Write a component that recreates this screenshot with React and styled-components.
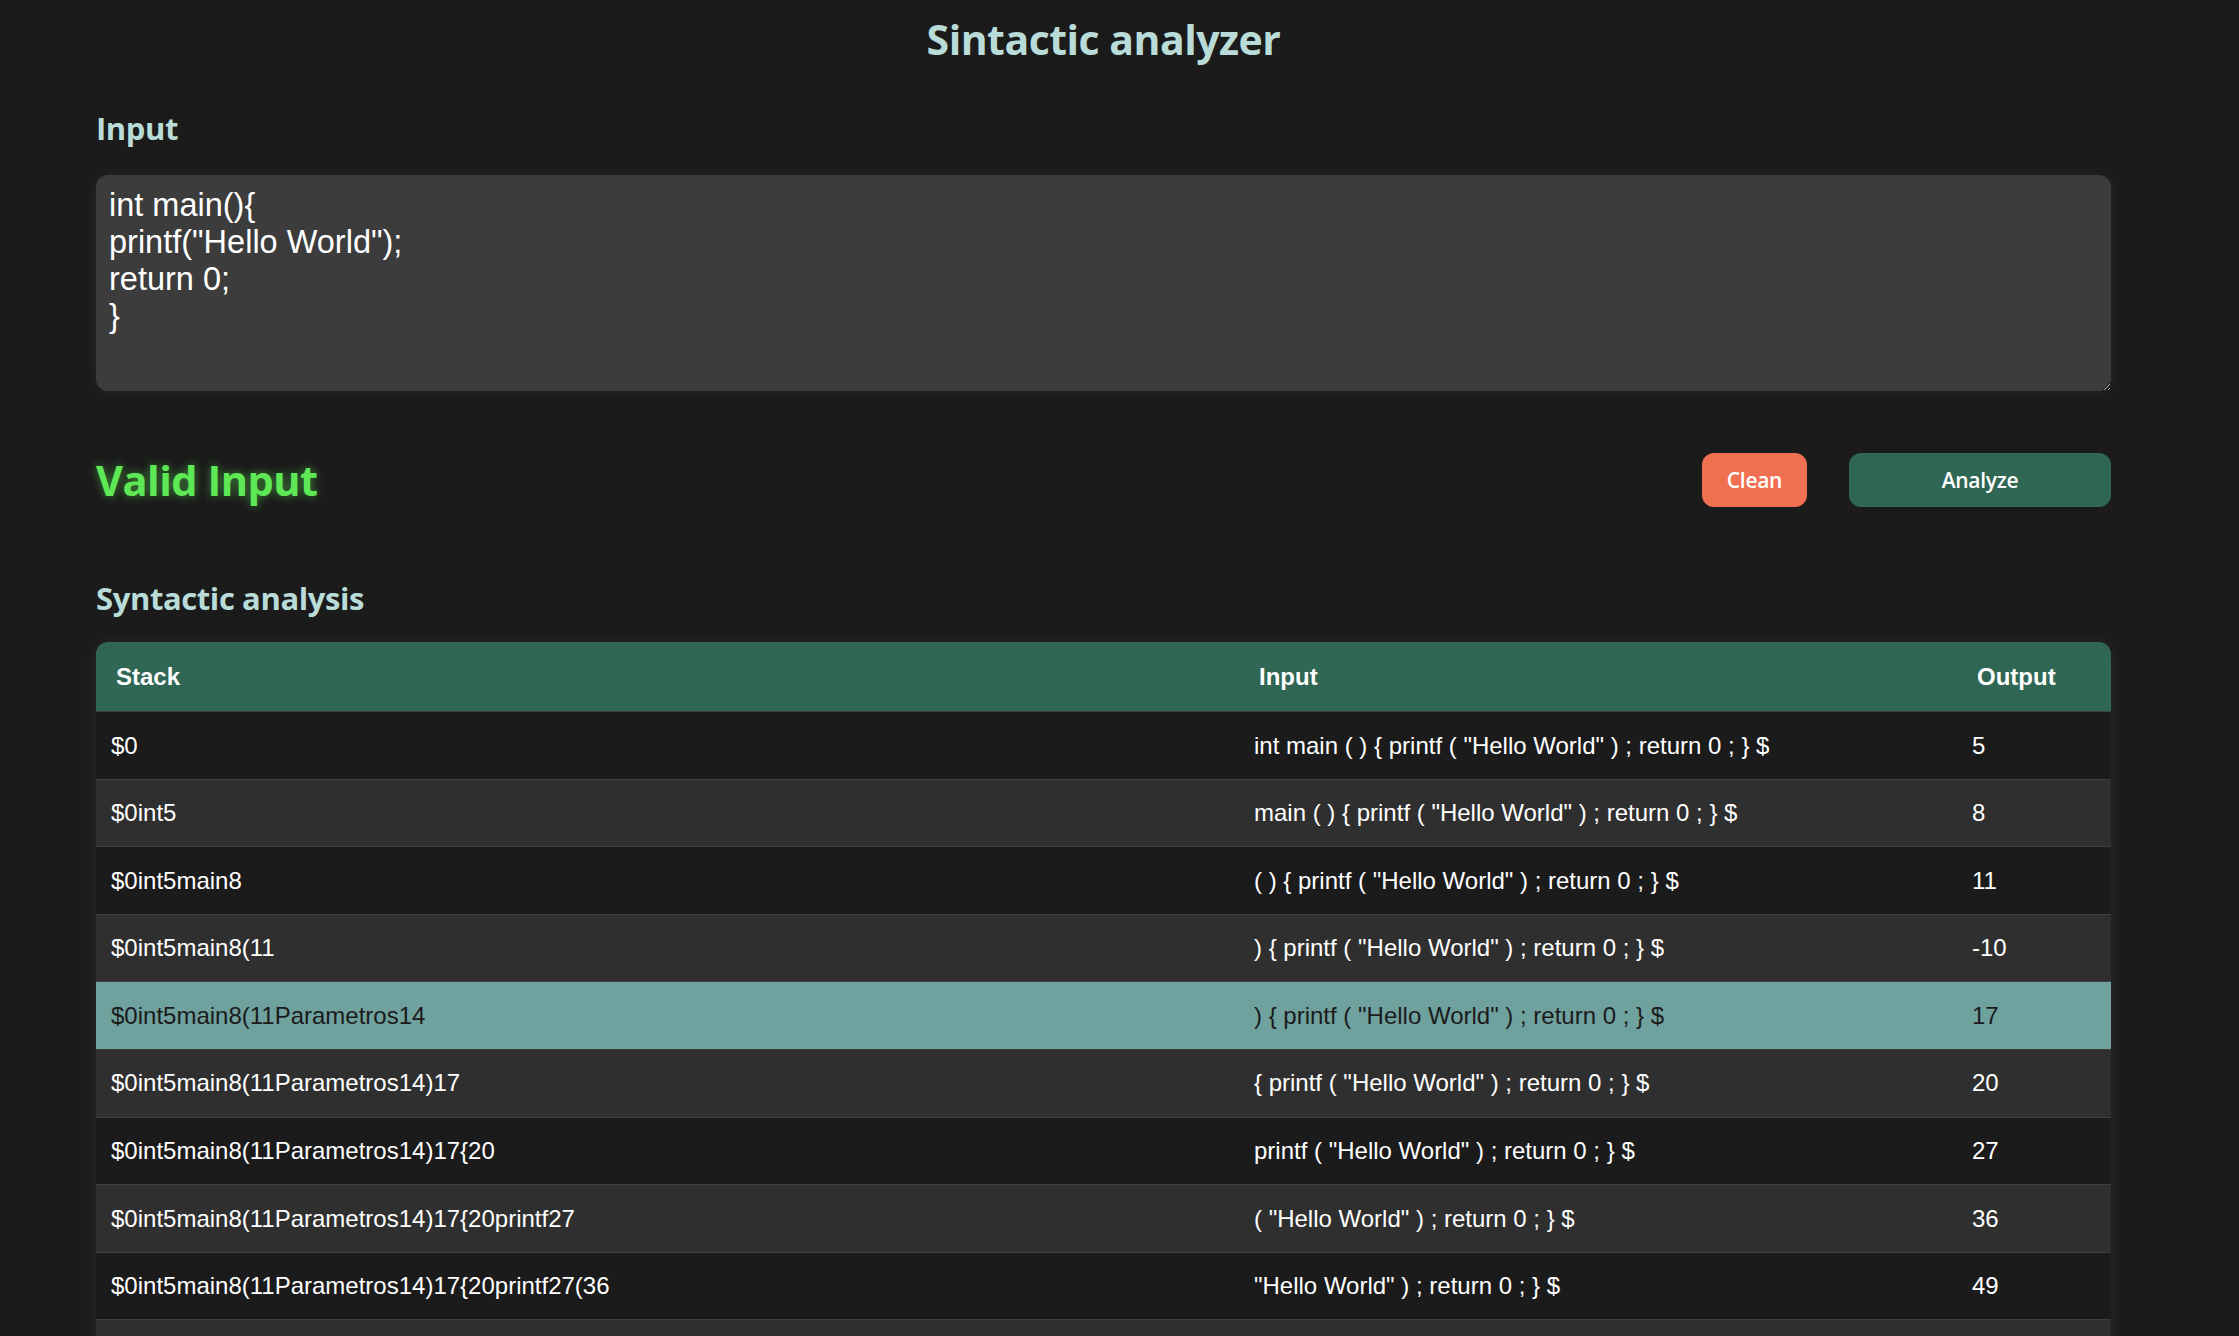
import React, { useState } from 'react';
import styled, { createGlobalStyle } from 'styled-components';

const GlobalStyle = createGlobalStyle`
  html, body {
    margin: 0;
    padding: 0;
    background: #1b1b1b;
  }
  * {
    box-sizing: border-box;
  }
`;

const Page = styled.main`
  width: 2015px;
  margin-left: 96px;
  padding-top: 14px;
  display: flex;
  flex-direction: column;
  font-family: 'Open Sans', 'Noto Sans', sans-serif;
`;

const Title = styled.h1`
  margin: 0;
  text-align: center;
  font-size: 41px;
  line-height: 50px;
  font-weight: 700;
  color: #b9dcd8;
  letter-spacing: -0.5px;
`;

const SectionTitle = styled.h2`
  margin: ${({ $top }) => $top}px 0 0;
  font-size: 31px;
  line-height: 40px;
  font-weight: 700;
  color: #b9dcd8;
  letter-spacing: -0.4px;
`;

const CodeInput = styled.textarea`
  margin-top: 27px;
  width: 100%;
  height: 216px;
  padding: 12px 13px;
  border: none;
  outline: none;
  border-radius: 12px;
  background: #3c3c3c;
  color: #ffffff;
  font-family: 'Liberation Sans', Arial, sans-serif;
  font-size: 32.5px;
  resize: vertical;
  box-shadow: 0 0 18px rgba(255, 255, 255, 0.05);
`;

const ActionRow = styled.div`
  margin-top: 62px;
  display: flex;
  align-items: center;
  gap: 42px;
`;

const Status = styled.div`
  flex: 1;
  font-size: 41.5px;
  line-height: 54px;
  font-weight: 700;
  color: #5fe856;
  letter-spacing: -0.5px;
  text-shadow: 0 0 10px rgba(95, 232, 86, 0.55);
`;

const Button = styled.button`
  height: 54px;
  width: ${({ $width }) => $width}px;
  border: none;
  border-radius: 12px;
  background: ${({ $variant }) => ($variant === 'danger' ? '#f07052' : '#306654')};
  color: #ffffff;
  font-family: 'Open Sans', 'Noto Sans', sans-serif;
  font-size: 21px;
  font-weight: 600;
  letter-spacing: -0.3px;
  cursor: pointer;
`;

const TableWrap = styled.div`
  margin-top: 24px;
  border-radius: 12px 12px 0 0;
  overflow: hidden;
  box-shadow: 0 0 20px rgba(255, 255, 255, 0.06);
`;

const Table = styled.table`
  width: 100%;
  border-collapse: collapse;
  table-layout: fixed;
  font-family: 'Liberation Sans', Arial, sans-serif;
  font-size: 24px;
  color: #ffffff;
`;

const HeadCell = styled.th`
  width: ${({ $width }) => $width};
  background: #306654;
  text-align: left;
  font-weight: 700;
  line-height: 28px;
  padding: 20.5px 20px;
`;

const Row = styled.tr`
  background: ${({ $active, $even }) => ($active ? '#6fa19f' : $even ? '#2f2f2f' : '#1b1b1b')};
  color: ${({ $active }) => ($active ? '#1b1b1b' : '#ffffff')};
  border-top: 1px solid #404040;
`;

const Cell = styled.td`
  padding: 19.5px 15px;
  line-height: 27.6px;
  white-space: nowrap;
  overflow: hidden;
`;

const steps = [
  ['$0', 'int main ( ) { printf ( "Hello World" ) ; return 0 ; } $', '5'],
  ['$0int5', 'main ( ) { printf ( "Hello World" ) ; return 0 ; } $', '8'],
  ['$0int5main8', '( ) { printf ( "Hello World" ) ; return 0 ; } $', '11'],
  ['$0int5main8(11', ') { printf ( "Hello World" ) ; return 0 ; } $', '-10'],
  ['$0int5main8(11Parametros14', ') { printf ( "Hello World" ) ; return 0 ; } $', '17'],
  ['$0int5main8(11Parametros14)17', '{ printf ( "Hello World" ) ; return 0 ; } $', '20'],
  ['$0int5main8(11Parametros14)17{20', 'printf ( "Hello World" ) ; return 0 ; } $', '27'],
  ['$0int5main8(11Parametros14)17{20printf27', '( "Hello World" ) ; return 0 ; } $', '36'],
  ['$0int5main8(11Parametros14)17{20printf27(36', '"Hello World" ) ; return 0 ; } $', '49'],
  ['$0int5main8(11Parametros14)17{20printf27(36"Hello World"49', ') ; return 0 ; } $', '56'],
  ['$0int5main8(11Parametros14)17{20printf27(36"Hello World"49)56', '; return 0 ; } $', '63'],
];

const ACTIVE_ROW = 4;

export default function App() {
  const [code, setCode] = useState('int main(){\nprintf("Hello World");\nreturn 0;\n}');

  return (
    <>
      <GlobalStyle />
      <Page>
        <Title>Sintactic analyzer</Title>
        <SectionTitle $top={44}>Input</SectionTitle>
        <CodeInput value={code} onChange={(e) => setCode(e.target.value)} spellCheck={false} />
        <ActionRow>
          <Status>Valid Input</Status>
          <Button $variant="danger" $width={105} onClick={() => setCode('')}>
            Clean
          </Button>
          <Button $width={262}>Analyze</Button>
        </ActionRow>
        <SectionTitle $top={71}>Syntactic analysis</SectionTitle>
        <TableWrap>
          <Table>
            <thead>
              <tr>
                <HeadCell $width="1143px">Stack</HeadCell>
                <HeadCell $width="718px">Input</HeadCell>
                <HeadCell $width="154px">Output</HeadCell>
              </tr>
            </thead>
            <tbody>
              {steps.map(([stack, input, output], i) => (
                <Row key={i} $even={i % 2 === 1} $active={i === ACTIVE_ROW}>
                  <Cell>{stack}</Cell>
                  <Cell>{input}</Cell>
                  <Cell>{output}</Cell>
                </Row>
              ))}
            </tbody>
          </Table>
        </TableWrap>
      </Page>
    </>
  );
}
